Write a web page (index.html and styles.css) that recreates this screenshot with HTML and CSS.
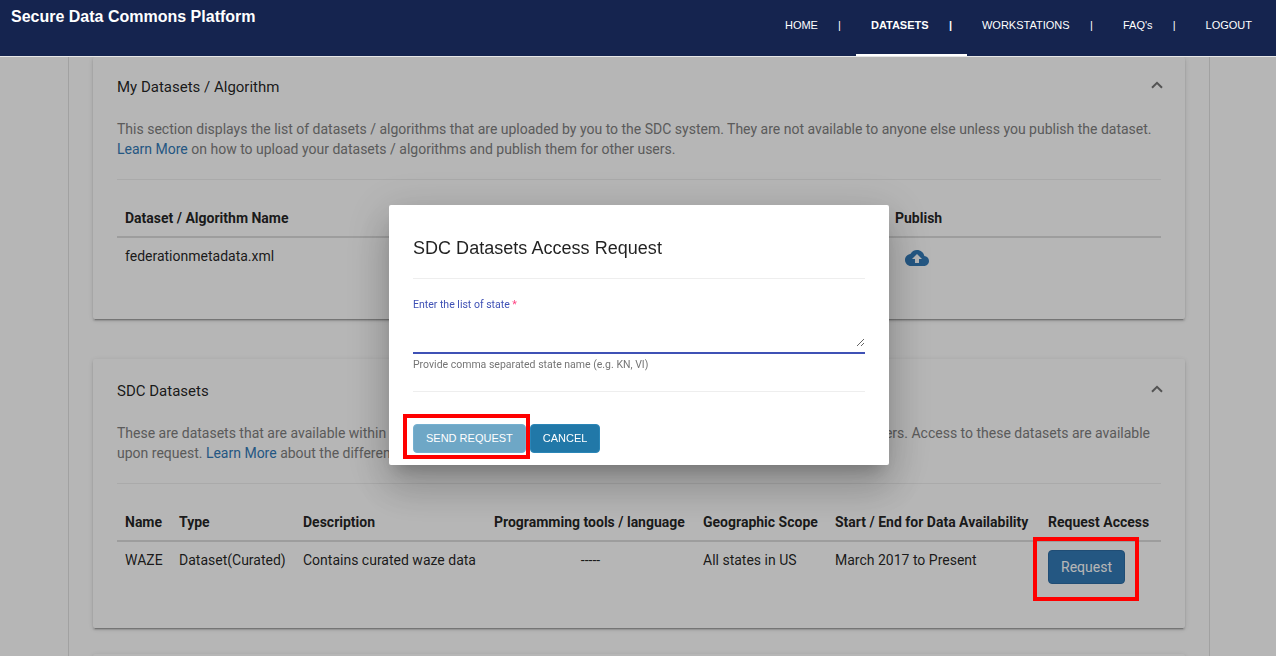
FILE: index.html
```html
<!DOCTYPE html>
<html lang="en">
<head>
<meta charset="utf-8">
<title>Secure Data Commons Platform</title>
<link rel="stylesheet" href="styles.css">
</head>
<body>
<header class="topbar">
  <div class="brand">Secure Data Commons Platform</div>
  <nav class="nav">
    <a class="nav-item nav-home"><span>HOME</span><span>|</span></a>
    <a class="nav-item nav-datasets active"><span>DATASETS</span><span>|</span></a>
    <a class="nav-item nav-work"><span>WORKSTATIONS</span><span>|</span></a>
    <a class="nav-item nav-faq"><span>FAQ's</span><span>|</span></a>
    <a class="nav-item"><span>LOGOUT</span></a>
  </nav>
</header>
<main class="content">
  <div class="page">
    <section class="card card-mine">
      <div class="card-head">
        <h2>My Datasets / Algorithm</h2>
        <svg class="chevron" viewBox="0 0 12 8"><path d="M1 6.8 6 1.8l5 5" fill="none" stroke="#757575" stroke-width="2"/></svg>
      </div>
      <p class="desc">This section displays the list of datasets / algorithms that are uploaded by you to the SDC system. They are not available to anyone else unless you publish the dataset.<br><a>Learn More</a> on how to upload your datasets / algorithms and publish them for other users.</p>
      <table class="table">
        <colgroup><col class="c-file"><col></colgroup>
        <thead><tr><th>Dataset / Algorithm Name</th><th>Publish</th></tr></thead>
        <tbody><tr>
          <td>federationmetadata.xml</td>
          <td><svg class="cloud" viewBox="0 0 24 24"><path fill="#337ab7" d="M19.35 10.04C18.67 6.59 15.64 4 12 4 9.11 4 6.6 5.64 5.35 8.04 2.34 8.36 0 10.91 0 14c0 3.31 2.69 6 6 6h13c2.76 0 5-2.24 5-5 0-2.64-2.05-4.78-4.65-4.96zM14 13v4h-4v-4H7l5-5 5 5h-3z"/></svg></td>
        </tr></tbody>
      </table>
    </section>
    <section class="card card-sdc">
      <div class="card-head">
        <h2>SDC Datasets</h2>
        <svg class="chevron" viewBox="0 0 12 8"><path d="M1 6.8 6 1.8l5 5" fill="none" stroke="#757575" stroke-width="2"/></svg>
      </div>
      <div class="desc">
        <div class="desc-line"><span>These are datasets that are available within</span><span>users. Access to these datasets are available</span></div>
        <div>upon request. <a>Learn More</a> about the different</div>
      </div>
      <table class="table">
        <colgroup><col class="c-name"><col class="c-type"><col class="c-desc"><col class="c-tools"><col class="c-geo"><col class="c-date"><col></colgroup>
        <thead><tr><th>Name</th><th>Type</th><th>Description</th><th>Programming tools / language</th><th>Geographic Scope</th><th>Start / End for Data Availability</th><th>Request Access</th></tr></thead>
        <tbody><tr>
          <td>WAZE</td><td>Dataset(Curated)</td><td>Contains curated waze data</td><td class="center">-----</td><td>All states in US</td><td>March 2017 to Present</td>
          <td><button class="request">Request</button></td>
        </tr></tbody>
      </table>
    </section>
    <section class="card card-next"></section>
  </div>
</main>
<div class="backdrop">
  <div class="dialog">
    <h1>SDC Datasets Access Request</h1>
    <div class="field">
      <label for="states">Enter the list of state <span class="star">*</span></label>
      <textarea id="states"></textarea>
      <div class="hint">Provide comma separated state name (e.g. KN, VI)</div>
    </div>
    <div class="actions">
      <button class="btn disabled">SEND REQUEST</button>
      <button class="btn">CANCEL</button>
    </div>
  </div>
</div>
<div class="mark mark-send"></div>
<div class="mark mark-request"></div>
</body>
</html>
```
FILE: styles.css
```css
* { box-sizing: border-box; }
body {
  margin: 0;
  height: 656px;
  overflow: hidden;
  background: #fff;
  font: 14px/20px Roboto, sans-serif;
  color: rgba(0, 0, 0, .87);
}
h1, h2, p { margin: 0; font-weight: 400; }

/* Top bar */
.topbar {
  position: relative;
  z-index: 3;
  display: flex;
  justify-content: space-between;
  height: 57px;
  padding: 0 9px 0 11px;
  background: #15244f;
  border-bottom: 1px solid #e7e7e7;
  color: #fff;
  font-family: "Liberation Sans", Arial, sans-serif;
}
.brand { padding-top: 7px; font-size: 16px; font-weight: 700; }
.nav { display: flex; font-size: 11px; }
.nav-item {
  display: flex;
  justify-content: space-between;
  padding: 15px 15px 0;
  height: 56px;
}
.nav-home { width: 86px; }
.nav-datasets { width: 111px; }
.nav-work { width: 141px; }
.nav-faq { width: 82.6px; }
.active { font-weight: 700; border-bottom: 2px solid #fff; }

/* Page and cards */
.content { height: 599px; padding: 0 66px 0 68px; overflow: hidden; }
.page {
  height: 640px;
  padding: 0 24px;
  border: solid #e2e2e2;
  border-width: 0 1px;
}
.card {
  padding: 20px 24px 0;
  background: #fff;
  border-radius: 2px;
  box-shadow: 0 3px 1px -2px rgba(0, 0, 0, .2), 0 2px 2px 0 rgba(0, 0, 0, .14), 0 1px 5px 0 rgba(0, 0, 0, .12);
}
.card-mine { height: 262px; margin-bottom: 40px; }
.card-sdc { height: 269px; padding-top: 22px; margin-bottom: 26px; }
.card-next { height: 60px; }
.card-head { display: flex; justify-content: space-between; height: 42px; }
.card-head h2 { font-size: 15px; line-height: 20px; }
.chevron { width: 12px; height: 8px; margin: 4px -2px 0 0; }
.desc {
  height: 61px;
  margin-bottom: 20px;
  border-bottom: 1px solid #eee;
  color: #808080;
  white-space: nowrap;
}
.desc a { color: #337ab7; }
.desc-line { display: flex; justify-content: space-between; padding-right: 11px; }

/* Tables */
.table { width: 100%; table-layout: fixed; border-collapse: separate; border-spacing: 0; }
.table th, .table td { padding: 8px; text-align: left; vertical-align: top; white-space: nowrap; }
.table th { height: 38px; border-bottom: 2px solid #ddd; font-weight: 700; }
.table .center { text-align: center; }
.c-file { width: 770px; }
.c-name { width: 54px; }
.c-type { width: 124px; }
.c-desc { width: 191px; }
.c-tools { width: 209px; }
.c-geo { width: 132px; }
.c-date { width: 213px; }
.cloud { display: block; width: 24px; height: 24px; margin-left: 10px; }
.request {
  display: block;
  width: 77px;
  height: 34px;
  padding: 0;
  background: #337ab7;
  border: 1px solid #2e6da4;
  border-radius: 4px;
  color: #fff;
  font: 14px/20px Roboto, sans-serif;
}

/* Dialog */
.backdrop {
  position: fixed;
  inset: 0;
  z-index: 2;
  display: flex;
  justify-content: center;
  align-items: flex-start;
  padding: 205px 0 0 2px;
  background: rgba(0, 0, 0, .288);
}
.dialog {
  width: 500px;
  height: 260px;
  padding: 24px;
  background: #fff;
  border-radius: 2px;
  box-shadow: 0 11px 15px -7px rgba(0, 0, 0, .2), 0 24px 38px 3px rgba(0, 0, 0, .14), 0 9px 46px 8px rgba(0, 0, 0, .12);
}
.dialog h1 {
  height: 50px;
  padding-top: 9px;
  border-bottom: 1px solid #eee;
  font: 18px/20px "Liberation Sans", Arial, sans-serif;
  letter-spacing: .03px;
}
.field { height: 113px; padding-top: 18px; border-bottom: 1px solid #eee; font-size: 10.5px; line-height: 16px; }
.field label { display: block; color: #3f51b5; }
.star { color: #ff4081; }
.field textarea {
  display: block;
  width: 100%;
  height: 34px;
  margin-bottom: 5px;
  padding: 0;
  border: 0;
  outline: 0;
  resize: vertical;
}
.hint { padding-top: 3px; border-top: 2px solid #3f51b5; color: #757575; }
.actions { display: flex; gap: 4px; padding-top: 32px; }
.btn {
  height: 29px;
  padding: 0 12px 2px;
  background: #2178a8;
  border: 1px solid #2b86b7;
  border-radius: 4px;
  color: #fff;
  font: 11px/16px "Liberation Sans", Arial, sans-serif;
}
.disabled { opacity: .65; }

/* Red callout frames */
.mark { position: absolute; z-index: 4; border: 4px solid #f00; }
.mark-send { left: 403px; top: 414px; width: 127px; height: 45px; }
.mark-request { left: 1033px; top: 537px; width: 106px; height: 64px; }
```
